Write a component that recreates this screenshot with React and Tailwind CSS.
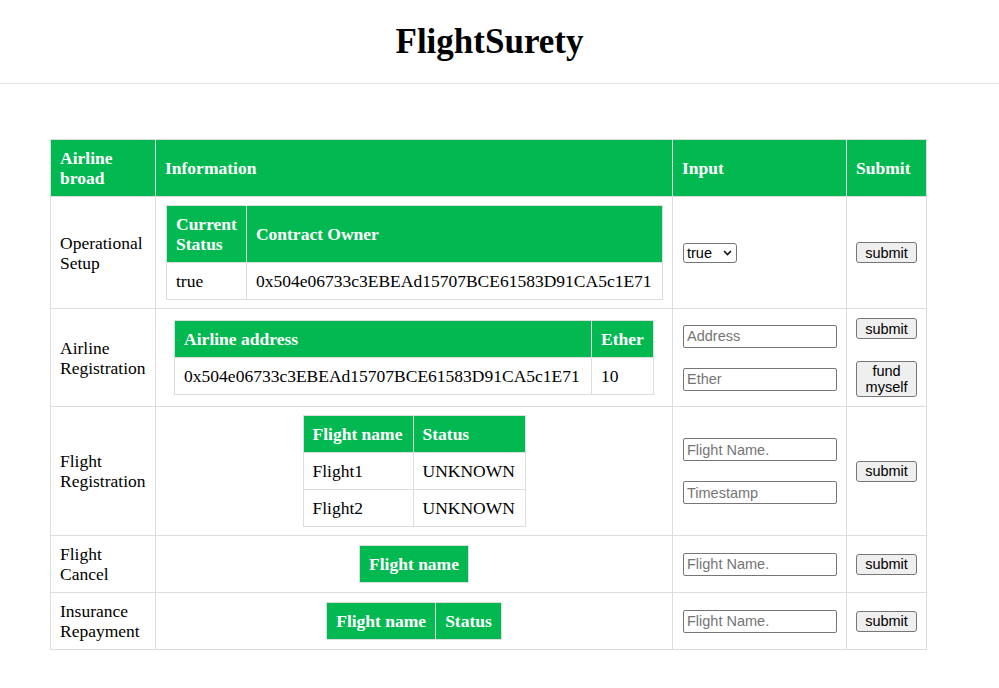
import React from 'react';

const address = "0x504e06733c3EBEAd15707BCE61583D91CA5c1E71";

const Chevron = () => (
    <svg className="absolute right-[5px] top-[7px] pointer-events-none" width="9" height="6" viewBox="0 0 9 6" fill="none">
        <path d="M1 1l3.5 3.5L8 1" stroke="#111" strokeWidth="1.6" />
    </svg>
);

const TextInput = ({ placeholder }) => (
    <input
        type="text"
        placeholder={placeholder}
        className="block w-[154px] h-[23px] px-[3px] border border-[#767676] rounded-[2px] bg-white text-[14.5px] placeholder:text-[#757575] font-['Liberation_Sans',Arial,sans-serif] outline-none"
    />
);

const Btn = ({ children, tall }) => (
    <button
        type="button"
        className={tall
            ? "block w-[61px] h-[36px] border border-[#767676] rounded-[3px] bg-[#efefef] text-[14.5px] leading-[16px] text-black font-['Liberation_Sans',Arial,sans-serif]"
            : "block w-[61px] h-[21px] border border-[#767676] rounded-[3px] bg-[#efefef] text-[14.5px] leading-[16px] text-black font-['Liberation_Sans',Arial,sans-serif]"}
    >
        {children}
    </button>
);

const App = () => {
    return (
        <div className="min-h-screen bg-white text-black font-['Liberation_Serif','Times_New_Roman',serif] text-[17.5px] leading-[20px]">
            <header className="h-[84px] pr-[20px] border-b border-[#e6e6e6] flex items-center justify-center">
                <h1 className="text-[35px] leading-[40px] font-bold">FlightSurety</h1>
            </header>

            <table className="mt-[55px] ml-[50px] w-[877px] table-fixed border-collapse border border-[#ddd]">
                <thead>
                    <tr className="bg-[#02b951] text-white">
                        <th className="w-[105px] border border-[#ddd] px-[9px] py-[8px] text-left font-bold">Airline broad</th>
                        <th className="w-[517px] border border-[#ddd] px-[9px] py-[8px] text-left font-bold">Information</th>
                        <th className="w-[174px] border border-[#ddd] px-[9px] py-[8px] text-left font-bold">Input</th>
                        <th className="w-[80px] border border-[#ddd] px-[9px] py-[8px] text-left font-bold">Submit</th>
                    </tr>
                </thead>
                <tbody>
                    {/* operational setup */}
                    <tr>
                        <td className="border border-[#ddd] px-[9px] py-[8px]">Operational Setup</td>
                        <td className="border border-[#ddd] px-[10px] py-[8px]">
                            <table className="w-[497px] border-collapse border border-[#ddd]">
                                <thead>
                                    <tr className="bg-[#02b951] text-white">
                                        <th className="w-[79px] border border-[#ddd] px-[9px] py-[8px] text-left font-bold">Current Status</th>
                                        <th className="border border-[#ddd] px-[9px] py-[8px] text-left font-bold">Contract Owner</th>
                                    </tr>
                                </thead>
                                <tbody>
                                    <tr>
                                        <td className="border border-[#ddd] px-[9px] py-[8px]">true</td>
                                        <td className="border border-[#ddd] px-[9px] py-[8px]">{address}</td>
                                    </tr>
                                </tbody>
                            </table>
                        </td>
                        <td className="border border-[#ddd] px-[10px] py-[8px]">
                            <div className="relative inline-block">
                                <select className="appearance-none block w-[54px] h-[20px] pl-[3px] border border-[#767676] rounded-[3px] bg-white text-[14.5px] leading-[16px] font-['Liberation_Sans',Arial,sans-serif]">
                                    <option>true</option>
                                    <option>false</option>
                                </select>
                                <Chevron />
                            </div>
                        </td>
                        <td className="border border-[#ddd] px-[9px] py-[8px]">
                            <Btn>submit</Btn>
                        </td>
                    </tr>

                    {/* airline registration */}
                    <tr>
                        <td className="border border-[#ddd] px-[9px] py-[8px]">Airline Registration</td>
                        <td className="border border-[#ddd] px-[10px] py-[8px]">
                            <table className="mx-auto border-collapse border border-[#ddd]">
                                <thead>
                                    <tr className="bg-[#02b951] text-white">
                                        <th className="w-[417px] border border-[#ddd] px-[9px] py-[8px] text-left font-bold">Airline address</th>
                                        <th className="border border-[#ddd] px-[9px] py-[8px] text-left font-bold">Ether</th>
                                    </tr>
                                </thead>
                                <tbody>
                                    <tr>
                                        <td className="border border-[#ddd] px-[9px] py-[8px]">{address}</td>
                                        <td className="border border-[#ddd] px-[9px] py-[8px]">10</td>
                                    </tr>
                                </tbody>
                            </table>
                        </td>
                        <td className="border border-[#ddd] px-[10px] py-[8px]">
                            <div className="flex flex-col gap-[20px]">
                                <TextInput placeholder="Address" />
                                <TextInput placeholder="Ether" />
                            </div>
                        </td>
                        <td className="border border-[#ddd] px-[9px] py-[9px]">
                            <div className="flex flex-col gap-[22px]">
                                <Btn>submit</Btn>
                                <Btn tall>fund<br />myself</Btn>
                            </div>
                        </td>
                    </tr>

                    {/* flight registration */}
                    <tr>
                        <td className="border border-[#ddd] px-[9px] py-[8px]">Flight Registration</td>
                        <td className="border border-[#ddd] px-[10px] py-[8px]">
                            <table className="mx-auto border-collapse border border-[#ddd]">
                                <thead>
                                    <tr className="bg-[#02b951] text-white">
                                        <th className="w-[110px] border border-[#ddd] px-[9px] py-[8px] text-left font-bold">Flight name</th>
                                        <th className="w-[112px] border border-[#ddd] px-[9px] py-[8px] text-left font-bold">Status</th>
                                    </tr>
                                </thead>
                                <tbody>
                                    <tr>
                                        <td className="border border-[#ddd] px-[9px] py-[8px]">Flight1</td>
                                        <td className="border border-[#ddd] px-[9px] py-[8px]">UNKNOWN</td>
                                    </tr>
                                    <tr>
                                        <td className="border border-[#ddd] px-[9px] py-[8px]">Flight2</td>
                                        <td className="border border-[#ddd] px-[9px] py-[8px]">UNKNOWN</td>
                                    </tr>
                                </tbody>
                            </table>
                        </td>
                        <td className="border border-[#ddd] px-[10px] py-[8px]">
                            <div className="flex flex-col gap-[20px]">
                                <TextInput placeholder="Flight Name." />
                                <TextInput placeholder="Timestamp" />
                            </div>
                        </td>
                        <td className="border border-[#ddd] px-[9px] py-[8px]">
                            <Btn>submit</Btn>
                        </td>
                    </tr>

                    {/* flight cancel */}
                    <tr>
                        <td className="border border-[#ddd] px-[9px] py-[8px]">Flight Cancel</td>
                        <td className="border border-[#ddd] px-[10px] py-[8px]">
                            <table className="mx-auto border-collapse border border-[#ddd]">
                                <thead>
                                    <tr className="bg-[#02b951] text-white">
                                        <th className="border border-[#ddd] px-[9px] py-[8px] text-left font-bold">Flight name</th>
                                    </tr>
                                </thead>
                            </table>
                        </td>
                        <td className="border border-[#ddd] px-[10px] py-[8px]">
                            <TextInput placeholder="Flight Name." />
                        </td>
                        <td className="border border-[#ddd] px-[9px] py-[8px]">
                            <Btn>submit</Btn>
                        </td>
                    </tr>

                    {/* insurance repayment */}
                    <tr>
                        <td className="border border-[#ddd] px-[9px] py-[8px]">Insurance Repayment</td>
                        <td className="border border-[#ddd] px-[10px] py-[8px]">
                            <table className="mx-auto border-collapse border border-[#ddd]">
                                <thead>
                                    <tr className="bg-[#02b951] text-white">
                                        <th className="border border-[#ddd] px-[9px] py-[8px] text-left font-bold">Flight name</th>
                                        <th className="border border-[#ddd] px-[9px] py-[8px] text-left font-bold">Status</th>
                                    </tr>
                                </thead>
                            </table>
                        </td>
                        <td className="border border-[#ddd] px-[10px] py-[8px]">
                            <TextInput placeholder="Flight Name." />
                        </td>
                        <td className="border border-[#ddd] px-[9px] py-[8px]">
                            <Btn>submit</Btn>
                        </td>
                    </tr>
                </tbody>
            </table>
        </div>
    );
};

export default App;
